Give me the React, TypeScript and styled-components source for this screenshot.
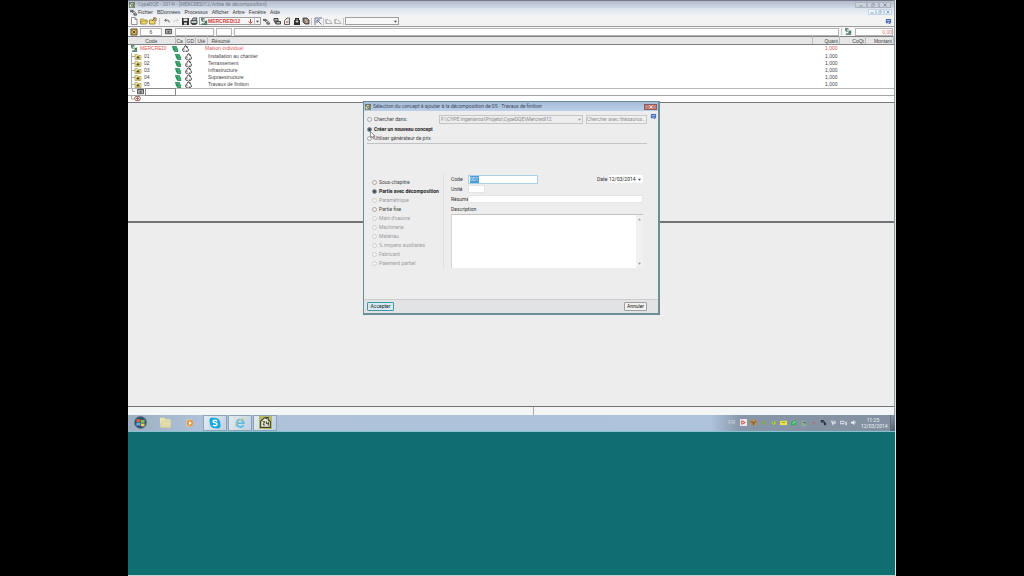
import React from "react";
import styled, { createGlobalStyle, css } from "styled-components";

const Global = createGlobalStyle`
  * { box-sizing: border-box; }
  body {
    margin: 0;
    background: #000;
    font: 5px/7px "Liberation Sans", Arial, sans-serif;
    color: #444;
  }
  button, input, select, textarea {
    font: inherit;
    color: inherit;
    margin: 0;
    padding: 0;
    border: 0;
    border-radius: 0;
    background: none;
    appearance: none;
    outline: 0;
    min-width: 0;
  }
  svg { display: block; flex: none; }
`;

const Desktop = styled.div`
  position: relative;
  display: flex;
  flex-direction: column;
  width: 75%;
  min-height: 100vh;
  margin: 0 auto;
  background: #0f6e70;
  border-right: 1px solid #d8e6e6;
  border-bottom: 1px solid #b9d3d3;
  white-space: nowrap;
`;
const AppWindow = styled.main`
  background: #ededee;
  border-right: 1px solid #9a9a9e;
`;
const TitleBar = styled.header`
  display: flex;
  align-items: center;
  gap: 3px;
  height: 8px;
  padding: 0 3px 0 1px;
  border-top: 1px solid #77788a;
  background: linear-gradient(#b4bccb, #d0d9e6);
  font-family: Roboto, sans-serif;
  color: #737c8b;
`;
const Push = styled.span`
  flex: 1;
`;
const CaptionButton = styled.button<{ $light?: boolean }>`
  display: flex;
  align-items: center;
  justify-content: center;
  width: ${(p) => (p.$light ? 8 : 12)}px;
  height: 6px;
  border: 1px solid ${(p) => (p.$light ? "#c3d5e6" : "#aeb3c2")};
  background: ${(p) => (p.$light ? "#edf5fb" : "#ccd1dc")};
  color: ${(p) => (p.$light ? "#7fa3c4" : "#868c9c")};
`;
const ButtonPair = styled.div`
  display: flex;
`;
const MenuBar = styled.nav`
  display: flex;
  align-items: center;
  gap: 1px;
  height: 8px;
  padding: 0 2px;
  background: linear-gradient(#dbe2ec, #f1f3f6);
`;
const MenuGroup = styled.div`
  display: flex;
  gap: 4px;
`;
const MenuButton = styled.button`
  color: #333;
`;
const Toolbar = styled.div`
  display: flex;
  align-items: center;
  gap: 1px;
  height: 10px;
  padding: 0 2px;
  background: #f3f3f4;
`;
const ToolButton = styled.button<{ $wide?: boolean }>`
  display: flex;
  align-items: center;
  justify-content: center;
  width: ${(p) => (p.$wide ? 9 : 8)}px;
  height: 8px;
`;
const Divider = styled.span<{ $gap?: number }>`
  width: 1px;
  height: 7px;
  margin: 0 ${(p) => p.$gap ?? 0}px;
  background: #c6c6c8;
`;
const Combo = styled.div<{ $width: number }>`
  display: flex;
  align-items: center;
  width: ${(p) => p.$width}px;
  height: 8px;
  padding: 0 1px;
  border: 1px solid #9f9fa2;
  background: #f7f7f7;
`;
const ComboSelect = styled.select<{ $red?: boolean; $muted?: boolean }>`
  flex: 1;
  height: 6px;
  line-height: 6px;
  color: ${(p) => (p.$red ? "#d5423f" : p.$muted ? "#8c8c8c" : "#444")};
  font-weight: ${(p) => (p.$red ? "bold" : "normal")};
`;
const EntryBar = styled.div`
  display: flex;
  align-items: center;
  gap: 2px;
  height: 10px;
  padding: 0 1px;
  border-top: 1px solid #9d9da0;
  background: #f6f6f6;
`;
const Entry = styled.input<{ $width?: number; $value?: boolean }>`
  ${(p) => (p.$width ? css`width: ${p.$width}px;` : css`flex: 1;`)}
  height: 8px;
  border: 1px solid #b5b5b7;
  background: #fff;
  text-align: ${(p) => (p.$value ? "right" : "center")};
  color: ${(p) => (p.$value ? "#e06a68" : "#444")};
`;
const Grid = styled.table`
  width: 100%;
  table-layout: fixed;
  border-collapse: collapse;
  background: #fff;
`;
const HeadCell = styled.th<{ $align?: "center" | "right"; $pad?: number }>`
  height: 8px;
  padding: 0 1px 0 ${(p) => p.$pad ?? 1}px;
  line-height: 6px;
  font-weight: normal;
  text-align: ${(p) => p.$align ?? "left"};
  background: #e6e6e7;
  border-top: 1px solid #808083;
  border-bottom: 1px solid #808083;
  border-right: 1px solid #bcbcbf;
  overflow: hidden;
`;
const Row = styled.tr<{ $root?: boolean }>`
  height: ${(p) => (p.$root ? 8 : 7)}px;
  color: ${(p) => (p.$root ? "#dd5855" : "#444")};
`;
const Cell = styled.td<{ $right?: boolean; $pad?: number }>`
  padding: 0 2px 0 ${(p) => p.$pad ?? 0}px;
  line-height: 7px;
  text-align: ${(p) => (p.$right ? "right" : "left")};
`;
const CodeLine = styled.span`
  display: flex;
  align-items: center;
  gap: 2px;
`;
const Outdent = styled.div`
  margin-left: -3px;
`;
const EditLine = styled.div`
  display: flex;
  align-items: center;
  gap: 1px;
  height: 8px;
  padding-left: 4px;
  background: #fff;
  border-top: 1px solid #b9b9bb;
  border-bottom: 1px solid #a5a5a8;
`;
const CodeEditor = styled.input`
  width: 31px;
  height: 8px;
  border: 1px solid #8a8a8d;
  background: #fff;
`;
const EndLine = styled.div`
  display: flex;
  align-items: center;
  height: 7px;
  padding-left: 2px;
  background: #fff;
  border-bottom: 1px solid #77777a;
`;
const Pane = styled.section<{ $height: number }>`
  height: ${(p) => p.$height}px;
  border-bottom: ${(p) => (p.$height < 150 ? 2 : 1)}px solid #737376;
`;
const StatusBar = styled.footer`
  display: flex;
  height: 8px;
  background: #f4f5f7;
`;
const StatusPart = styled.div`
  width: 53%;
  border-right: 1px solid #a9a9ad;
`;
const Taskbar = styled.footer`
  display: flex;
  align-items: center;
  height: 17px;
  border-bottom: 1px solid #85c1cf;
  background: linear-gradient(90deg, #9dafc0, #afc2da 10%, #aec3dc 76%, #8796a8 80%, #8290a1);
`;
const TaskButton = styled.button<{ $open?: boolean }>`
  display: flex;
  align-items: center;
  justify-content: center;
  width: 24px;
  height: 16px;
  margin-right: 1px;
  ${(p) =>
    p.$open &&
    css`
      border: 1px solid #8fa3b7;
      background: linear-gradient(120deg, #e2ebf3, #bfd0e1);
    `}
`;
const Tray = styled.div`
  display: flex;
  align-items: center;
  gap: 3px;
  color: #d3dbe4;
`;
const Language = styled.span`
  margin-right: 2px;
`;
const Clock = styled.time`
  width: 24px;
  margin: 0 5px 0 4px;
  font-family: Roboto, sans-serif;
  line-height: 6px;
  text-align: center;
  color: #eef2f7;
`;
const ShowDesktop = styled.button`
  width: 5px;
  height: 16px;
  border-left: 1px solid #5e6c7d;
  background: linear-gradient(135deg, #8997a8, #4f5c6d);
`;

const Dialog = styled.section`
  position: absolute;
  left: 235px;
  top: 101px;
  width: 297px;
  border: 1px solid #6c8e98;
  border-right-width: 2px;
  border-bottom-width: 2px;
  background: #ededee;
  font-family: Roboto, sans-serif;
`;
const DialogTitle = styled.header`
  display: flex;
  align-items: center;
  gap: 2px;
  height: 9px;
  padding: 0 1px 0 1px;
  background: linear-gradient(#a5bbd8, #bdd0e8);
  color: #3f4a5c;
`;
const Close = styled.button`
  display: flex;
  align-items: center;
  justify-content: center;
  width: 13px;
  height: 6px;
  border: 1px solid #8e5a5c;
  background: #c47f78;
  color: #f3dedb;
`;
const Source = styled.fieldset`
  margin: 0 13px 0 3px;
  padding: 2px 0 0;
  border: 0;
  border-bottom: 1px solid #c3c3c5;
  height: 33px;
`;
const SourceLine = styled.div<{ $height: number }>`
  display: flex;
  align-items: center;
  gap: 3px;
  height: ${(p) => p.$height}px;
`;
const Choice = styled.label<{ $bold?: boolean; $muted?: boolean; $width?: number }>`
  display: flex;
  align-items: center;
  gap: 2px;
  height: 9px;
  width: ${(p) => (p.$width ? `${p.$width}px` : "auto")};
  font-weight: ${(p) => (p.$bold ? "bold" : "normal")};
  color: ${(p) => (p.$muted ? "#9b9b9d" : p.$bold ? "#222" : "#444")};
`;
const Radio = styled.input<{ $muted?: boolean }>`
  width: 5px;
  height: 5px;
  border: 1px solid ${(p) => (p.$muted ? "#cfcfd1" : "#a4a6a9")};
  border-radius: 50%;
  background: #f4f4f4;
  &:checked {
    border-color: #8897a1;
    background: #45525c;
  }
`;
const PathBox = styled(Combo)`
  border-color: #c4c4c6;
  background: #ededee;
  height: 9px;
`;
const SearchButton = styled.button`
  width: 61px;
  height: 9px;
  border: 1px solid #c9c9cb;
  background: #f0f0f0;
  color: #8f8f91;
`;
const Help = styled.button`
  position: absolute;
  right: 1px;
  top: 11px;
`;
const Body = styled.div`
  display: flex;
  align-items: flex-start;
  height: 155px;
  padding: 30px 15px 0 8px;
`;
const Kinds = styled.fieldset`
  width: 72px;
  margin: 0 7px 0 0;
  padding: 4px 0 0;
  border: 0;
  border-right: 1px solid #dfdfe1;
`;
const Fields = styled.div`
  flex: 1;
  display: flex;
  flex-direction: column;
`;
const Field = styled.div`
  display: flex;
  align-items: center;
  height: 10px;
`;
const FieldLabel = styled.label<{ $width: number }>`
  width: ${(p) => p.$width}px;
  color: #333;
`;
const TextBox = styled.input<{ $width?: number }>`
  ${(p) => (p.$width ? css`width: ${p.$width}px;` : css`flex: 1;`)}
  height: 8px;
  padding: 0 1px;
  background: #fff;
  border: 1px solid #e3e5e8;
`;
const CodeBox = styled.div`
  display: flex;
  align-items: center;
  width: 70px;
  height: 9px;
  padding: 0 1px;
  border: 1px solid #a9cfe4;
  background: #fff;
`;
const CodeInput = styled.input`
  width: 9px;
  height: 7px;
  line-height: 7px;
  background: #4f9bd5;
  color: #d9ecfa;
`;
const DateBox = styled.div`
  display: flex;
  align-items: center;
  justify-content: space-between;
  width: 34px;
  height: 8px;
  padding-right: 2px;
  background: #fff;
`;
const DateInput = styled.input`
  width: 27px;
  color: #222;
`;
const MemoBox = styled.div`
  display: flex;
  height: 54px;
  border-top: 1px solid #c2c2c4;
  border-left: 1px solid #d6d6d8;
`;
const Memo = styled.textarea`
  flex: 1;
  resize: none;
  background: #fff;
`;
const Scroll = styled.div`
  display: flex;
  flex-direction: column;
  align-items: center;
  justify-content: space-between;
  width: 7px;
  padding: 3px 0;
  background: #f1f1f2;
`;
const DialogFooter = styled.footer`
  display: flex;
  align-items: center;
  justify-content: space-between;
  height: 14px;
  padding: 0 11px 0 3px;
  border-top: 1px solid #cbcbcd;
  background: #e2e3e4;
`;
const Action = styled.button<{ $primary?: boolean }>`
  width: ${(p) => (p.$primary ? 27 : 23)}px;
  height: 9px;
  line-height: 7px;
  border: 1px solid ${(p) => (p.$primary ? "#4795a9" : "#a0a0a2")};
  border-radius: 1px;
  background: ${(p) => (p.$primary ? "#d3eaf2" : "#f1f1f1")};
  color: #222;
`;
const Pointer = styled.svg`
  position: absolute;
  left: 6px;
  top: 29px;
`;

/* All glyphs share an 8 by 8 drawing area. */
const Glyph = ({ size = 8, children }: { size?: number; children: React.ReactNode }) => (
  <svg width={size} height={size} viewBox="0 0 8 8" fill="none" aria-hidden="true">
    {children}
  </svg>
);
const DownArrow = ({ muted }: { muted?: boolean }) => (
  <Glyph size={3}>
    <path d="M0 2h8L4 7z" fill={muted ? "#999" : "#444"} />
  </Glyph>
);
const UpArrow = () => (
  <Glyph size={3}>
    <path d="M0 6h8L4 1z" fill="#999" />
  </Glyph>
);
const Cross = () => (
  <Glyph size={4}>
    <path d="M1 1l6 6M7 1L1 7" stroke="currentColor" strokeWidth="2" />
  </Glyph>
);
const Minimise = () => (
  <Glyph size={4}>
    <path d="M1 6h6" stroke="currentColor" strokeWidth="2" />
  </Glyph>
);
const Restore = () => (
  <Glyph size={4}>
    <path d="M1 3h4v4H1zM3 3V1h4v4H5" stroke="currentColor" />
  </Glyph>
);
const AppIcon = ({ size = 7 }: { size?: number }) => (
  <Glyph size={size}>
    <path d="M0 0h8v8H0z" fill="#6c7761" />
    <path d="M1 3l3-2 3 2v4H1z" fill="#dcdfc2" />
    <path d="M2 3l2 1-1 2m1-3h2v3H4" stroke="#4a5041" />
  </Glyph>
);
const TreeRoot = () => (
  <Glyph size={7}>
    <path d="M0 1h4M1 1v2l2 1M1 7h6M4 3l3 3M4 6l3-3" stroke="#35684d" strokeWidth="1.200" />
  </Glyph>
);
const Folder = () => (
  <svg width="11" height="7" viewBox="0 0 11 7" fill="none" aria-hidden="true">
    <path d="M0.500 0v7M1 3.500h3" stroke="#aaa" />
    <path d="M4 1.500h2.500l1 1H10v4H4z" fill="#efe59b" stroke="#a99b52" strokeWidth=".7" />
    <path d="M5.500 5.500v-1.500L7 3l1.500 1v1.500z" fill="#5b5322" />
  </svg>
);
const GreenTag = () => (
  <Glyph size={7}>
    <path d="M0 1h5l1 2v1h1v4H3L1 5z" fill="#27915a" />
    <path d="M1.500 2.500h3M3 4.500h3M3.500 6.500h3" stroke="#83c9a1" strokeWidth=".7" />
  </Glyph>
);
const Cycle = () => (
  <Glyph size={7}>
    <path d="M2.200 3.300L3.400 1h1.400l1 1.800M6.500 3.800l1 2-.8 1.400H4.500M3.200 7.200H1.200L.5 5.900l1-2" stroke="#444" strokeWidth="1.100" />
    <path d="M4.500 3.500h2.200V1.300zM5 5.800v2.200L3.800 7zM.3 4h2.400v1.800z" fill="#444" />
  </Glyph>
);
const CodeBadge = ({ red }: { red?: boolean }) => (
  <Glyph size={7}>
    <path
      d={red ? "M2 1.500h4l1.500 2.500L6 6.500H2L.5 4z" : "M.5 1.500h7v5h-7z"}
      stroke={red ? "#98504c" : "#3b3b42"}
      fill="#e7dfdc"
    />
    <path d={red ? "M2.500 4h3M4 2.500v3" : "M1 2.200h6M2.500 3.500v2M4 3.500v2M5.500 3.500v2"} stroke={red ? "#98504c" : "#3b3b42"} />
  </Glyph>
);
const PageIcon = () => (
  <Glyph><path d="M1.500.5h3.500l2 2v5H1.500zM5 .5v2h2" stroke="#777" strokeWidth=".8" fill="#fff" /></Glyph>
);
const OpenIcon = () => (
  <Glyph><path d="M.5 7V2h3l1 1H7v1M.5 7l1-3h6l-1 3z" stroke="#a28b38" strokeWidth=".8" fill="#efda79" /></Glyph>
);
const OpenUpIcon = () => (
  <Glyph>
    <path d="M.5 7V3H6v4z" stroke="#a28b38" fill="#efda79" />
    <path d="M3 4l3-3m-2 0h3v3" stroke="#8a5d33" />
  </Glyph>
);
const UndoIcon = () => (
  <Glyph size={6}><path d="M3 1L1 3l2 2M1 3h4q2 0 2 3" stroke="#55585f" strokeWidth="1.200" /></Glyph>
);
const RedoIcon = () => (
  <Glyph size={6}><path d="M5 1l2 2-2 2M7 3H3Q1 3 1 6" stroke="#c4c5ca" /></Glyph>
);
const SaveIcon = () => (
  <Glyph><path d="M1 1h7v7H1z" fill="#303035" /><path d="M2.500 1.500h4v2.500h-4zM3 5.500h3v2H3z" fill="#dfe0e4" /></Glyph>
);
const PrintIcon = () => (
  <Glyph><path d="M2 3l1-2h4L6 3M1 3.500h6v3H1zM2 6v1.500h4V6" stroke="#393d42" fill="#b9c9c4" strokeWidth=".9" /></Glyph>
);
const LinkIcon = () => (
  <Glyph size={7}><path d="M.5 1.500h3v1.500h-3zM2 3l3 3M3.500 2.500l3 1.500M4.500 5.500h3V7h-3z" stroke="#444" fill="#ccc" strokeWidth=".9" /></Glyph>
);
const StackIcon = () => (
  <Glyph><path d="M1 1.500h4v2.500H1zM3 4.500h4.500V7H3zM2 4v2h1" stroke="#333" fill="#bbb" strokeWidth=".9" /></Glyph>
);
const SheetIcon = () => (
  <Glyph><path d="M1.500 7.500v-4L4 1h2.500v6.500z" stroke="#555" fill="#e6e6e6" strokeWidth=".9" /><path d="M3 5h2.500" stroke="#b94c48" /></Glyph>
);
const TowerIcon = () => (
  <Glyph><path d="M1 3h1V1h4v2h1v5H1z" fill="#32302e" /><path d="M2.500 4.500h3M4 2v4" stroke="#ddd" strokeWidth=".8" /></Glyph>
);
const BookIcon = () => (
  <Glyph><path d="M1 1h4l2 2v4H3L1 5z" fill="#8a7260" stroke="#444" strokeWidth=".9" /><path d="M2.500 3h3M3.500 5h2.500" stroke="#eee" strokeWidth=".8" /></Glyph>
);
const LevelIcon = () => (
  <Glyph><path d="M1 1h6v6H1z" fill="#e4c75c" stroke="#5a4226" /><path d="M2.500 2.500l3 3M5.500 2.500l-3 3" stroke="#5a4226" /></Glyph>
);
const ArrowIcon = () => (
  <Glyph><path d="M1 8V1h7M3 3l4.500 4.500M3 6V3h3" stroke="#68728f" /></Glyph>
);
const PencilIcon = () => (
  <Glyph><path d="M1 2.500h2l1 1h1l2 3H1zM1 2.500v4" stroke="#aaaaad" strokeWidth=".9" /></Glyph>
);
const HelpIcon = () => (
  <Glyph size={7}><path d="M1 1h6v4L5 7 4 6H1z" fill="#4767b1" /><path d="M2 3h4M3 5h2" stroke="#c5d3f2" /></Glyph>
);
const DownRed = () => (
  <Glyph size={5}><path d="M4 0v6M1 4l3 3 3-3" stroke="#bb3836" strokeWidth="1.500" /></Glyph>
);

const chapters = [
  ["01", "Installation au chantier"],
  ["02", "Terrassement"],
  ["03", "Infrastructure"],
  ["04", "Supraestructure"],
  ["05", "Travaux de finition"],
];
const kinds: [string, boolean][] = [
  ["Sous-chapitre", true],
  ["Partie avec décomposition", true],
  ["Paramétrique", false],
  ["Partie fixe", true],
  ["Main d'oeuvre", false],
  ["Machinerie", false],
  ["Matériau", false],
  ["% moyens auxiliaires", false],
  ["Fabricant", false],
  ["Paiement partiel", false],
];
const menus = ["Fichier", "BDonnées", "Processus", "Afficher", "Arbre", "Fenêtre", "Aide"];

const Tool = ({ name, wide, children }: { name: string; wide?: boolean; children: React.ReactNode }) => (
  <ToolButton type="button" aria-label={name} $wide={wide}>{children}</ToolButton>
);

const MainToolbar = () => (
  <Toolbar>
    <Tool name="Nouveau"><PageIcon /></Tool>
    <Tool name="Ouvrir" wide><OpenIcon /></Tool>
    <Tool name="Importer"><OpenUpIcon /></Tool>
    <Divider $gap={1} />
    <Tool name="Annuler" wide><UndoIcon /></Tool>
    <Tool name="Rétablir"><RedoIcon /></Tool>
    <Tool name="Enregistrer"><SaveIcon /></Tool>
    <Tool name="Imprimer"><PrintIcon /></Tool>
    <Combo $width={62}>
      <TreeRoot />
      <ComboSelect $red aria-label="Ouvrage"><option>MERCREDI12</option></ComboSelect>
      <DownRed /><Divider $gap={1} /><DownArrow />
    </Combo>
    <Tool name="Lier" wide><LinkIcon /></Tool>
    <Tool name="Empiler" wide><StackIcon /></Tool>
    <Tool name="Feuille" wide><SheetIcon /></Tool>
    <Tool name="Ouvrages" wide><TowerIcon /></Tool>
    <Tool name="Banque"><BookIcon /></Tool>
    <Divider />
    <Tool name="Remonter" wide><ArrowIcon /></Tool>
    <Divider />
    <Tool name="Modifier"><PencilIcon /></Tool>
    <Tool name="Corriger"><PencilIcon /></Tool>
    <Divider />
    <Combo $width={54}>
      <ComboSelect aria-label="Filtre"><option></option></ComboSelect><DownArrow />
    </Combo>
    <Push />
    <Tool name="Aide"><HelpIcon /></Tool>
  </Toolbar>
);

const Tree = () => (
  <Grid>
    <colgroup>
      <col style={{ width: 47 }} /><col style={{ width: 10 }} /><col style={{ width: 10 }} />
      <col style={{ width: 12 }} /><col /><col style={{ width: 27 }} />
      <col style={{ width: 26 }} /><col style={{ width: 28 }} />
    </colgroup>
    <thead>
      <tr>
        <HeadCell $align="center">Code</HeadCell>
        <HeadCell>Ca</HeadCell><HeadCell>GD</HeadCell><HeadCell $pad={2}>Uté</HeadCell>
        <HeadCell $pad={4}>Résumé</HeadCell>
        <HeadCell $align="right">Quant</HeadCell><HeadCell $align="right">CoQt</HeadCell>
        <HeadCell $align="right">Montant</HeadCell>
      </tr>
    </thead>
    <tbody>
      <Row $root>
        <Cell $pad={3}><CodeLine><TreeRoot />MERCREDI</CodeLine></Cell>
        <Cell><Outdent><GreenTag /></Outdent></Cell>
        <Cell><Outdent><Cycle /></Outdent></Cell>
        <Cell />
        <Cell $pad={1}><Outdent>Maison individuel</Outdent></Cell>
        <Cell $right>1,000</Cell><Cell /><Cell />
      </Row>
      {chapters.map(([code, name]) => (
        <Row key={code}>
          <Cell $pad={3}><CodeLine><Folder />{code}</CodeLine></Cell>
          <Cell><GreenTag /></Cell><Cell><Cycle /></Cell><Cell />
          <Cell $pad={1}>{name}</Cell><Cell $right>1,000</Cell><Cell /><Cell />
        </Row>
      ))}
    </tbody>
  </Grid>
);

const ConceptDialog = () => (
  <Dialog role="dialog" aria-labelledby="concept-title">
    <DialogTitle>
      <AppIcon size={6} />
      <span id="concept-title">Sélection du concept à ajouter à la décomposition de 05 - Travaux de finition</span>
      <Push />
      <Close type="button" aria-label="Fermer"><Cross /></Close>
    </DialogTitle>
    <Help type="button" aria-label="Aide"><HelpIcon /></Help>
    <Source>
      <SourceLine $height={12}>
        <Choice $width={69}><Radio type="radio" name="source" />Chercher dans:</Choice>
        <PathBox $width={144}>
          <ComboSelect $muted aria-label="Chemin">
            <option>F:\CYPE Ingenieros\Projets\CypeDQE\Mercredi12</option>
          </ComboSelect>
          <DownArrow muted />
        </PathBox>
        <SearchButton type="button">Chercher avec thésaurus...</SearchButton>
      </SourceLine>
      <Choice $bold><Radio type="radio" name="source" defaultChecked />Créer un nouveau concept</Choice>
      <Choice><Radio type="radio" name="source" />Utiliser générateur de prix</Choice>
    </Source>
    <Pointer width="5" height="8" viewBox="0 0 5 8" aria-hidden="true">
      <path d="M.5.5v6l1.500-1 1 2 1-.5-1-2H5z" fill="#fff" stroke="#555" strokeWidth=".6" />
    </Pointer>
    <Body>
      <Kinds>
        {kinds.map(([name, on]) => (
          <Choice key={name} $bold={name.startsWith("Partie avec")} $muted={!on}>
            <Radio type="radio" name="kind" $muted={!on} disabled={!on} defaultChecked={name.startsWith("Partie avec")} />
            {name}
          </Choice>
        ))}
      </Kinds>
      <Fields>
        <Field>
          <FieldLabel $width={17} htmlFor="code">Code</FieldLabel>
          <CodeBox><CodeInput id="code" defaultValue="001" /></CodeBox>
          <Push />
          <FieldLabel $width={12} htmlFor="date">Date</FieldLabel>
          <DateBox><DateInput id="date" defaultValue="12/03/2014" /><DownArrow /></DateBox>
        </Field>
        <Field>
          <FieldLabel $width={17} htmlFor="unit">Unité</FieldLabel>
          <TextBox id="unit" $width={17} />
        </Field>
        <Field>
          <FieldLabel $width={17} htmlFor="summary">Résumé</FieldLabel>
          <TextBox id="summary" />
        </Field>
        <Field><FieldLabel $width={40} htmlFor="memo">Description</FieldLabel></Field>
        <MemoBox>
          <Memo id="memo" />
          <Scroll><UpArrow /><DownArrow muted /></Scroll>
        </MemoBox>
      </Fields>
    </Body>
    <DialogFooter>
      <Action type="button" $primary>Accepter</Action>
      <Action type="button">Annuler</Action>
    </DialogFooter>
  </Dialog>
);

const Windows = () => (
  <Glyph size={13}>
    <circle cx="4" cy="4" r="3.800" fill="#34536f" stroke="#73869a" strokeWidth=".4" />
    <path d="M1.500 2.200q1.200-.8 2.300 0v1.700q-1.100-.6-2.300 0z" fill="#e0603a" />
    <path d="M4.200 2.300q1.200.6 2.300 0V4q-1.100.600-2.300 0z" fill="#8dc152" />
    <path d="M1.500 4.300q1.200-.7 2.300 0V6q-1.100-.7-2.300 0z" fill="#5bb1e4" />
    <path d="M4.200 4.400q1.200.6 2.300 0v1.700q-1.100.600-2.300 0z" fill="#f0cc55" />
  </Glyph>
);
const Explorer = () => (
  <Glyph size={13}>
    <path d="M.5 1h3l.5 1h3v5H1z" fill="#eee5ae" />
    <path d="M2 3h5.500L7 7H1.500z" fill="#e2dcae" stroke="#c9c28e" strokeWidth=".3" />
  </Glyph>
);
const Player = () => (
  <Glyph size={10}>
    <path d="M1 1h4l2 3-2 3H1z" fill="#dccba6" />
    <circle cx="4" cy="4" r="2.500" fill="#e1953e" /><path d="M3.200 2.500L5.500 4 3.200 5.500z" fill="#fff" />
  </Glyph>
);
const Skype = () => (
  <Glyph size={12}>
    <circle cx="4" cy="4" r="3.500" fill="#16a7df" /><circle cx="2.300" cy="2.300" r="2" fill="#16a7df" />
    <circle cx="5.700" cy="5.700" r="2" fill="#16a7df" />
    <path d="M5.500 2.800Q4 1.700 2.900 2.500q-.6 1 1 1.300 2 .4 1.300 1.500Q4 6.300 2.600 5.300" stroke="#fff" strokeWidth=".9" />
  </Glyph>
);
const Explorer9 = () => (
  <Glyph size={12}>
    <path d="M6.500 5.300Q5.500 7 3.700 6.600 1.500 6 1.700 4q.4-2.400 2.600-2.300Q6.500 2 6.500 4.100H2" stroke="#63bce0" strokeWidth="1.200" />
    <path d="M.7 7Q-.3 5.500 3 2.700 7-.2 7.500 1.300" stroke="#e5cf69" strokeWidth=".6" />
  </Glyph>
);
const CypeIcon = () => (
  <Glyph size={13}>
    <path d="M0 0h8v8H0z" fill="#b5b96a" />
    <path d="M1 3.200L3.500 1l1 .6V1h1.200v1.400L7 3.400V7H1z" fill="#ecedd5" stroke="#3d402e" strokeWidth=".7" />
    <path d="M2.200 3.500h1.300L2.500 5.500h1.300M4.500 3.300v1.400h1.600M5.700 3.500v2.500" stroke="#3d402e" strokeWidth=".6" />
  </Glyph>
);

const tray = [
  { shape: "M0 0h8v8H0z", fill: "#efe4e4", mark: "M2 2l4 2-4 2z", ink: "#b6433f" },
  { shape: "M4 0l4 2v4L4 8 0 6V2z", fill: "#b09055", mark: "M1 3l3 1 3-1M4 4v3", ink: "#6f4a28" },
  { shape: "M1 5l3-3 3 2-3 3z", fill: "#8aa85e", mark: "M3 4h2", ink: "#7b964f" },
  { shape: "M1 3h3l1-2 2 4-3 2z", fill: "#a4cf47", mark: "M4 3v2", ink: "#6b9a2a" },
  { shape: "M0 2h8v5H0z", fill: "#e7e34e", mark: "M2 4h4", ink: "#a39a24" },
  { shape: "M1 3l6-2v6H1z", fill: "#36b05b", mark: "M3 5l3-2", ink: "#d2f0da" },
  { shape: "M1 2h4v2h2v4H2z", fill: "#8cae91", mark: "M3 4h3v2", ink: "#4c7655" },
  { shape: "M3 3h3v3H3z", fill: "#a58288", mark: "M4 4h1", ink: "#84575d" },
  { shape: "M1 1h3l3 4v2H5L4 4H1z", fill: "#2e3340", mark: "M3 2l2 2", ink: "#5b606c" },
  { shape: "M1 2h5l1 3H4v2H3z", fill: "#dce2e9", mark: "M3 3h2", ink: "#7a8798" },
  { shape: "M0 2h5v4H0zM6 3h2v4H6z", fill: "#cfd7e0", mark: "M1 4h3", ink: "#6c798a" },
  { shape: "M1 3h2l2-2v6L3 5H1z", fill: "#edf1f5", mark: "M6 3v2", ink: "#dfe5ec" },
];

export default function App() {
  return (
    <>
      <Global />
      <Desktop>
        <AppWindow>
          <TitleBar>
            <AppIcon size={6} />
            <span>CypeDQE - 2014i - [MERCREDI12/Arbre de décomposition]</span>
            <Push />
            <ButtonPair>
              <CaptionButton aria-label="Réduire"><Minimise /></CaptionButton>
              <CaptionButton aria-label="Restaurer"><Restore /></CaptionButton>
              <CaptionButton aria-label="Fermer"><Cross /></CaptionButton>
            </ButtonPair>
          </TitleBar>
          <MenuBar>
            <LinkIcon />
            <MenuGroup>
              {menus.map((m) => <MenuButton key={m} type="button">{m}</MenuButton>)}
            </MenuGroup>
            <Push />
            <ButtonPair>
              <CaptionButton $light aria-label="Réduire le document"><Minimise /></CaptionButton>
              <CaptionButton $light aria-label="Restaurer le document"><Restore /></CaptionButton>
              <CaptionButton $light aria-label="Fermer le document"><Cross /></CaptionButton>
            </ButtonPair>
          </MenuBar>
          <MainToolbar />
          <EntryBar>
            <Tool name="Position" wide><LevelIcon /></Tool>
            <Entry $width={22} defaultValue="6" aria-label="Niveau" />
            <Tool name="Code" wide><CodeBadge /></Tool>
            <Entry $width={39} aria-label="Code" />
            <Entry $width={16} aria-label="Unité" />
            <Entry aria-label="Résumé" />
            <Divider />
            <Tool name="Total" wide><TreeRoot /></Tool>
            <Entry $width={38} $value defaultValue="0,00" aria-label="Montant" />
          </EntryBar>
          <Tree />
          <EditLine>
            <svg width="4" height="7" viewBox="0 0 4 7" fill="none" aria-hidden="true">
              <path d="M.5 0v3.500H3" stroke="#aaa" />
            </svg>
            <CodeBadge />
            <CodeEditor aria-label="Nouveau code" />
          </EditLine>
          <EndLine>
            <svg width="4" height="6" viewBox="0 0 4 6" fill="none" aria-hidden="true">
              <path d="M1.500 0v3H4" stroke="#aaa" />
            </svg>
            <CodeBadge red />
          </EndLine>
          <Pane $height={120} />
          <Pane $height={184} />
          <StatusBar><StatusPart /></StatusBar>
        </AppWindow>
        <Taskbar>
          <TaskButton aria-label="Démarrer"><Windows /></TaskButton>
          <TaskButton aria-label="Explorateur"><Explorer /></TaskButton>
          <TaskButton aria-label="Lecteur"><Player /></TaskButton>
          <TaskButton $open aria-label="Skype"><Skype /></TaskButton>
          <TaskButton $open aria-label="Internet"><Explorer9 /></TaskButton>
          <TaskButton $open aria-label="CypeDQE"><CypeIcon /></TaskButton>
          <Push />
          <Tray>
            <Language>FR</Language>
            {tray.map((t) => (
              <Glyph key={t.shape} size={7}>
                <path d={t.shape} fill={t.fill} /><path d={t.mark} stroke={t.ink} />
              </Glyph>
            ))}
          </Tray>
          <Clock>11:25<br />12/03/2014</Clock>
          <ShowDesktop aria-label="Afficher le bureau" />
        </Taskbar>
        <ConceptDialog />
      </Desktop>
    </>
  );
}
